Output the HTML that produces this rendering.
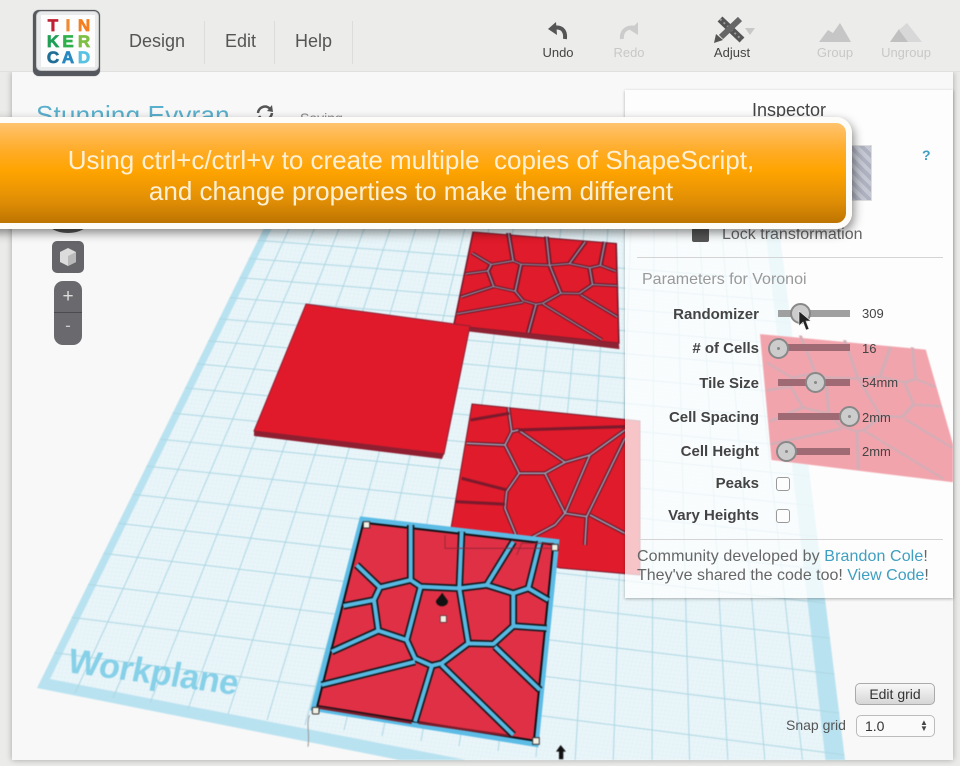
<!DOCTYPE html>
<html><head><meta charset="utf-8"><style>
html,body{margin:0;padding:0}
body{width:960px;height:766px;overflow:hidden;position:relative;background:#ebebe9;font-family:"Liberation Sans",sans-serif}
.a{position:absolute;white-space:nowrap}
.nav{top:31px;font-size:18px;color:#555}
.sep{top:21px;width:1px;height:43px;background:#dcdcda}
.tl{top:45px;font-size:13px;text-align:center}
#stage{left:12px;top:72px;width:941px;height:688px;background:#f8f8f8;box-shadow:0 0 6px rgba(0,0,0,.3)}
#panel{left:625px;top:90px;width:328px;height:508px;background:rgba(255,255,255,.74);box-shadow:0 1px 3px rgba(0,0,0,.3)}
.lb{right:201px;font-size:15px;font-weight:bold;color:#444;text-align:right;line-height:18px}
.tr{left:778px;width:72px;height:7px;background:rgba(90,90,90,.6)}
.th{width:17px;height:17px;border:2px solid #888;border-radius:50%;background:#ccc}
.th:after{content:"";position:absolute;left:7px;top:7px;width:3px;height:3px;background:#888;border-radius:50%}
.v{left:862px;font-size:13px;color:#444;line-height:16px}
.cb{left:776px;width:12px;height:12px;border:1px solid #999;border-radius:3px;background:#fdfdfd}
.ln{color:#3f9fc0}
</style></head><body>
<div class="a" id="stage"></div>

<svg class="a" style="left:0;top:0;filter:blur(.4px)" width="960" height="766" viewBox="0 0 960 766">
<defs>
<clipPath id="st"><rect x="12" y="72" width="941" height="688"/></clipPath>
<clipPath id="pl"><polygon points="37,688 300,155 770,155 850,800 600,800"/></clipPath>
<pattern id="fine" width="4" height="4" patternUnits="userSpaceOnUse" patternTransform="matrix(1 .11 -.25 1 0 0)"><path d="M0 0H4M0 0V4" stroke="#d8ebf2" stroke-width=".5" fill="none"/></pattern>
<path id="edges" fill="none" stroke-linejoin="round" d="M332 75V240L240 262L170 195M240 262L222 300L130 318M222 300L235 392L95 455M235 392L320 420L362 260L332 240M362 260L478 265L485 95M478 265L560 255L640 125M560 255L640 280L685 265L720 125M685 265L745 300M640 280V378L740 385M640 378L580 432L505 430L478 265M505 430L425 490L395 497L345 475L320 420M345 485L65 555M395 500L345 665M425 495L640 705M585 440L720 570"/>
<path id="medges" fill="none" stroke-linejoin="round" d="M805 548L815 620L795 660L680 655M815 620L835 615L975 712L1050 690L1155 615M795 660L838 745L915 745L975 712M838 745L800 800L795 850L830 935M915 745L975 865L1050 690M975 865L945 900L870 940M975 865L1040 875L1155 640M1040 875L1035 960M1050 870L1155 925"/>
<path id="medges2" fill="none" d="M692 585L808 565M835 615L1155 605M665 760L800 795M645 830L795 838"/>
<clipPath id="gc"><rect x="625" y="90" width="328" height="508"/></clipPath>
</defs>
<g clip-path="url(#st)">
<polygon points="37,688 300,155 770,155 850,800 600,800" fill="#b9e2f0"/>
<polygon points="50,679 303,165 758,165 830,800 600,786" fill="#e9f5f9"/>
<polygon points="50,679 303,165 758,165 830,800 600,786" fill="url(#fine)"/>
<g clip-path="url(#pl)" stroke="#aed7e3" stroke-width="1" fill="none">
<path d="M75 693L657 -569M113 698L657 -569M150 703L657 -569M188 709L657 -569M228 714L657 -569M267 720L657 -569M305 725L657 -569M344 730L657 -569M382 736L657 -569M421 741L657 -569M459 746L657 -569M498 751L657 -569M536 757L657 -569M575 762L657 -569M613 767L657 -569M652 772L657 -569M690 777L657 -569M729 782L657 -569M767 787L657 -569M806 792L657 -569"/>
<path d="M33 650L1000 775M52 615L1000 733M68 582L1000 694M83 551L1000 658M98 521L1000 623M112 492L1000 589M126 464L1000 556M139 437L1000 525M152 411L1000 495M165 386L1000 466M177 362L1000 438M188 339L1000 412M199 317L1000 386M210 296L1000 362M220 276L1000 340M230 257L1000 318M240 239L1000 297"/>
</g>
<text transform="matrix(1 .135 -.22 1 66 672)" font-family="Liberation Sans" font-weight="bold" font-size="34" fill="#86d0e8" textLength="170">Workplane</text>

<!-- top right tile -->
<g transform="matrix(.245 .0009 .0282 .169 425 220)">
<polygon points="188,70 765,135 708,725 45,625" fill="#e01b2b" stroke="#6f1a2c" stroke-width="6"/>
<polygon points="45,625 708,725 706,760 50,650" fill="#8d2233"/>
<use href="#edges" stroke="#6f1a2c" stroke-width="20"/>
<use href="#edges" stroke="#8f90a4" stroke-width="6"/>
</g>

<!-- red square -->
<polygon points="254,431 254,436 442,459 444,454" fill="#8f1f30"/>
<polygon points="306,304 470,326 444,454 254,431" fill="#e01a2b" stroke="#8a2133" stroke-width="1"/>

<!-- middle tile -->
<polygon points="472,404 640,421 640,575 560,568 449,540" fill="#e01b2b" stroke="#7a1a2c"/>
<g transform="translate(240 225) scale(.3333)">
<use href="#medges" stroke="#6f1a2c" stroke-width="12"/>
<use href="#medges" stroke="#9a9db0" stroke-width="4.5"/>
<use href="#medges2" stroke="#7a1a2c" stroke-width="9"/>
</g>

<!-- front tile -->
<g transform="translate(300 500) scale(.3333)">
<polygon points="186,58 770,125 708,733 40,625" fill="#e0304a" stroke="#5cbce6" stroke-width="16"/>
<polygon points="190,68 760,133 702,722 52,618" fill="#e03045" stroke="#101014" stroke-width="6"/>
<polygon points="50,618 335,665 335,672 52,626" fill="#7a1c2a"/>
<polygon points="355,665 635,705 635,712 355,672" fill="#7a1c2a"/>
<use href="#edges" stroke="#14181c" stroke-width="22"/>
<use href="#edges" stroke="#57b8e2" stroke-width="12"/>
<path d="M435 105V145H760M650 165L665 130H760" fill="none" stroke="#8f2436" stroke-width="2.5"/>
<rect x="190" y="65" width="19" height="19" fill="#f2f0e4" stroke="#333" stroke-width="3"/>
<rect x="755" y="133" width="19" height="19" fill="#f2f0e4" stroke="#333" stroke-width="3"/>
<rect x="37" y="622" width="20" height="20" rx="3" fill="#f2f0e4" stroke="#333" stroke-width="3"/>
<rect x="698" y="713" width="20" height="20" fill="#f2f0e4" stroke="#333" stroke-width="3"/>
<rect x="421" y="347" width="18" height="20" fill="#f2f0e4" stroke="#333" stroke-width="2"/>
<path d="M427 278C415 295 408 300 408 304A18 15 0 0 0 444 304C444 300 437 295 427 278Z" fill="#111"/>
<path d="M782 735L768 755H777V778H790V755H798Z" fill="#111"/>
<path d="M28 645C18 675 30 700 24 740" fill="none" stroke="#999" stroke-width="3"/>
</g>
</g>
</svg>

<!-- left controls -->
<div class="a" style="left:47px;top:215px;width:42px;height:18px;border-radius:0 0 21px 21px/0 0 12px 12px;background:#555"></div>
<div class="a" style="left:52px;top:241px;width:32px;height:32px;border-radius:5px;background:#66666a"></div>
<svg class="a" style="left:58px;top:247px" width="20" height="20"><polygon points="10,1 18,5 18,15 10,19 2,15 2,5" fill="#dcdcdc"/><polygon points="10,9 18,5 18,15 10,19" fill="#b9b9b9"/></svg>
<div class="a" style="left:54px;top:281px;width:28px;height:64px;border-radius:9px;background:#6a6a6e"></div>
<div class="a" style="left:54px;top:312px;width:28px;height:1px;background:#4c4c50"></div>
<div class="a" style="left:54px;top:286px;width:28px;text-align:center;color:#ddd;font-size:19px;line-height:22px">+</div>
<div class="a" style="left:54px;top:316px;width:28px;text-align:center;color:#ccc;font-size:17px;line-height:20px">-</div>

<!-- header -->
<div class="a" style="left:0;top:0;width:960px;height:71px;background:#ececea;border-bottom:1px solid #e0e0de"></div>
<div class="a" style="left:33px;top:10px;width:67px;height:66px;border-radius:6px;background:#55595f;box-shadow:0 0 1px #666"></div>
<div class="a" style="left:36px;top:11px;width:63px;height:60px;border-radius:5px;background:#e8eaec;border:1px solid #c8c8c8;box-sizing:border-box"></div>
<div class="a" style="left:41px;top:15px;width:54px;height:52px;background:#fdfdfd"></div>
<svg class="a" style="left:0;top:0" width="110" height="80" font-family="Liberation Sans" font-weight="bold" font-size="17" text-anchor="middle" stroke-width=".7">
<text x="53" y="31" fill="#c02033" stroke="#c02033">T</text><text x="68" y="31" fill="#f08a33" stroke="#f08a33">I</text><text x="84" y="31" fill="#f57f20" stroke="#f57f20">N</text>
<text x="53" y="47" fill="#1f9e55" stroke="#1f9e55">K</text><text x="68" y="47" fill="#2eb14c" stroke="#2eb14c">E</text><text x="84" y="47" fill="#7dbf42" stroke="#7dbf42">R</text>
<text x="53" y="63" fill="#1f6f96" stroke="#1f6f96">C</text><text x="68" y="63" fill="#2888c0" stroke="#2888c0">A</text><text x="84" y="63" fill="#58c2e2" stroke="#58c2e2">D</text>
</svg>
<div class="a nav" style="left:129px">Design</div><div class="a sep" style="left:204px"></div>
<div class="a nav" style="left:225px">Edit</div><div class="a sep" style="left:274px"></div>
<div class="a nav" style="left:295px">Help</div><div class="a sep" style="left:352px"></div>

<svg class="a" style="left:545px;top:20px" width="28" height="24"><path d="M8 8C16 6 21 10 20 19" fill="none" stroke="#555" stroke-width="4"/><polygon points="3,9 11,2 12,15" fill="#555"/></svg>
<svg class="a" style="left:616px;top:20px" width="28" height="24"><path d="M20 8C12 6 5 10 6 19" fill="none" stroke="#ccc" stroke-width="4"/><polygon points="22,2 22,15 14,10" fill="#ccc"/></svg>
<div class="a tl" style="left:528px;width:60px;color:#444">Undo</div>
<div class="a tl" style="left:599px;width:60px;color:#c8c8c8">Redo</div>
<svg class="a" style="left:712px;top:15px" width="48" height="30"><path d="M8 4L30 25" stroke="#555" stroke-width="7"/><path d="M8 4L30 25" stroke="#999" stroke-width="2" stroke-dasharray="2 3"/><path d="M28 4L9 22" stroke="#666" stroke-width="6"/><polygon points="2,28 4,19 11,25" fill="#555"/><polygon points="33,13 43,13 38,20" fill="#c8c8c8"/></svg>
<div class="a tl" style="left:702px;width:60px;color:#444">Adjust</div>
<svg class="a" style="left:815px;top:22px" width="40" height="22"><polygon points="4,20 13,8 18,11 25,1 36,20" fill="#c6c6c6"/></svg>
<svg class="a" style="left:888px;top:22px" width="40" height="22"><polygon points="2,20 11,7 22,20" fill="#c0c0c0"/><polygon points="11,8 19,1 34,20 20,20" fill="#d8d8d8"/></svg>
<div class="a tl" style="left:805px;width:60px;color:#c8c8c8">Group</div>
<div class="a tl" style="left:876px;width:60px;color:#c8c8c8">Ungroup</div>

<div class="a" style="left:36px;top:100px;font-size:26px;letter-spacing:.2px;color:#5ab0cc">Stunning Evyran</div>
<svg class="a" style="left:254px;top:104px" width="22" height="18"><path d="M4 9A7 7 0 0 1 17 6M18 9A7 7 0 0 1 5 12" fill="none" stroke="#555" stroke-width="2.5"/><polygon points="18,1 19,8 13,7" fill="#555"/></svg>
<div class="a" style="left:300px;top:110px;font-size:14px;color:#888">Saving</div>

<!-- inspector -->
<div class="a" id="panel"></div>
<svg class="a" style="left:0;top:0;filter:blur(.4px)" width="960" height="766"><g clip-path="url(#gc)"><g transform="matrix(.2769 .00126 .0921 .2272 701.5 318)"><polygon points="188,70 765,135 708,725 45,625" fill="#f2a4ad"/><use href="#edges" stroke="#d3aeb6" stroke-width="11"/></g></g></svg>
<div class="a" style="left:625px;top:100px;width:328px;text-align:center;font-size:18px;color:#444">Inspector</div>
<div class="a" style="left:838px;top:145px;width:34px;height:56px;border:1px solid #ddd;background:repeating-linear-gradient(45deg,#c5c8d2,#c5c8d2 4px,#aeb2c0 4px,#aeb2c0 8px);box-sizing:border-box"></div>
<div class="a" style="left:922px;top:147px;font-size:14px;font-weight:bold;color:#3f9fc0">?</div>
<div class="a" style="left:692px;top:228px;width:17px;height:14px;background:#555;border-radius:2px"></div>
<div class="a" style="left:722px;top:226px;font-size:16px;color:#666">Lock transformation</div>
<div class="a" style="left:637px;top:257px;width:306px;height:1px;background:#d4d4d4"></div>
<div class="a" style="left:642px;top:271px;font-size:16px;color:#999">Parameters for Voronoi</div>

<div class="a lb" style="top:306px">Randomizer</div>
<div class="a lb" style="top:340px"># of Cells</div>
<div class="a lb" style="top:375px">Tile Size</div>
<div class="a lb" style="top:409px">Cell Spacing</div>
<div class="a lb" style="top:443px">Cell Height</div>
<div class="a lb" style="top:475px">Peaks</div>
<div class="a lb" style="top:507px">Vary Heights</div>

<div class="a tr" style="top:310px;background:#a0a0a0"></div><div class="a th" style="left:790px;top:303px"></div><div class="a v" style="top:306px">309</div>
<div class="a tr" style="top:344px;background:#a06a74"></div><div class="a th" style="left:768px;top:338px"></div><div class="a v" style="top:341px">16</div>
<div class="a tr" style="top:379px;background:#a06a74"></div><div class="a th" style="left:805px;top:372px"></div><div class="a v" style="top:375px">54mm</div>
<div class="a tr" style="top:413px;background:#a06a74"></div><div class="a th" style="left:839px;top:406px"></div><div class="a v" style="top:410px">2mm</div>
<div class="a tr" style="top:448px;background:#a06a74"></div><div class="a th" style="left:776px;top:441px"></div><div class="a v" style="top:444px">2mm</div>
<div class="a cb" style="top:477px"></div><div class="a cb" style="top:509px"></div>
<svg class="a" style="left:797px;top:310px" width="16" height="22"><path d="M2 1L2 16L6 12L9 20L12 19L9 11L14 11Z" fill="#222" stroke="#eee" stroke-width=".6"/></svg>
<div class="a" style="left:637px;top:539px;width:306px;height:1px;background:#d4d4d4"></div>
<div class="a" style="left:637px;top:548px;font-size:16px;letter-spacing:.1px;color:#666">Community developed by <span class="ln">Brandon Cole</span>!</div>
<div class="a" style="left:637px;top:567px;font-size:16px;color:#666">They've shared the code too! <span class="ln">View Code</span>!</div>

<!-- grid controls -->
<div class="a" style="left:855px;top:683px;width:78px;height:20px;border:1px solid #aaa;border-radius:5px;background:linear-gradient(#f8f8f8,#d6d6d6);text-align:center;font-size:14px;line-height:20px;color:#333">Edit grid</div>
<div class="a" style="left:786px;top:717px;font-size:14px;color:#555">Snap grid</div>
<div class="a" style="left:856px;top:715px;width:77px;height:20px;border:1px solid #bbb;border-radius:5px;background:#fafafa;font-size:14px;line-height:20px;color:#333;text-indent:8px">1.0</div>
<div class="a" style="left:920px;top:720px;font-size:8px;line-height:6px;color:#444">▲<br>▼</div>

<!-- banner -->
<div class="a" style="left:-40px;top:117px;width:892px;height:112px;box-sizing:border-box;border:6px solid #fdfcf8;border-radius:16px;background:linear-gradient(#ffc36e 0%,#ffac26 28%,#ffa400 48%,#e08e05 78%,#bd7400 100%);box-shadow:2px 4px 10px rgba(0,0,0,.45)"></div>
<div class="a" style="left:0;top:145px;width:822px;text-align:center;font-size:26px;line-height:31px;color:#fff0d4;white-space:pre">Using ctrl+c/ctrl+v to create multiple  copies of ShapeScript,
and change properties to make them different</div>
</body></html>
